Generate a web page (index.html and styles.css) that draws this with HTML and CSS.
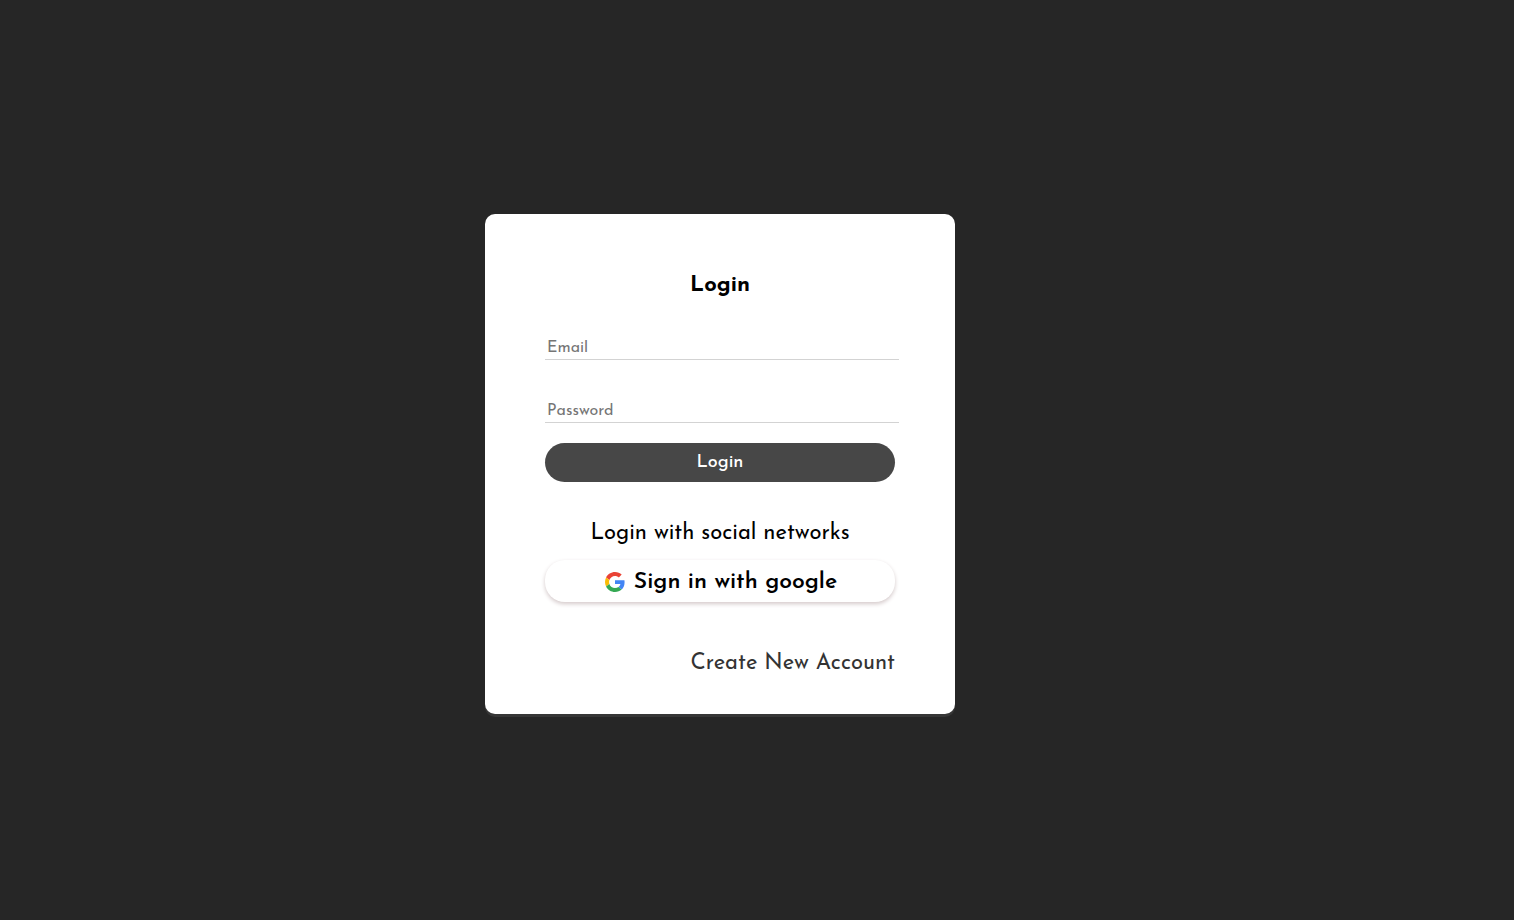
FILE: index.html
```html
<!DOCTYPE html>
<html lang="en">
<head>
<meta charset="utf-8">
<meta name="viewport" content="width=device-width, initial-scale=1">
<title>Login</title>
<link rel="stylesheet" href="styles.css">
</head>
<body>
<main class="page">
  <section class="card">
    <h1 class="title">Login</h1>
    <form class="form">
      <input class="field" type="email" placeholder="Email" aria-label="Email">
      <input class="field" type="password" placeholder="Password" aria-label="Password">
      <button class="submit" type="submit">Login</button>
    </form>
    <p class="social">Login with social networks</p>
    <button class="google" type="button">
      <svg class="logo" viewBox="0 0 48 48" aria-hidden="true">
        <path fill="#EA4335" d="M24 9.5c3.54 0 6.71 1.22 9.21 3.6l6.85-6.85C35.9 2.38 30.47 0 24 0 14.62 0 6.51 5.38 2.56 13.22l7.98 6.19C12.43 13.72 17.74 9.5 24 9.5z"/>
        <path fill="#4285F4" d="M46.98 24.55c0-1.57-.15-3.09-.38-4.55H24v9.02h12.94c-.58 2.96-2.26 5.48-4.78 7.18l7.73 6c4.51-4.18 7.09-10.36 7.09-17.65z"/>
        <path fill="#FBBC05" d="M10.53 28.59c-.48-1.45-.76-2.99-.76-4.59s.27-3.14.76-4.59l-7.98-6.19C.92 16.46 0 20.12 0 24c0 3.88.92 7.54 2.56 10.78l7.97-6.19z"/>
        <path fill="#34A853" d="M24 48c6.48 0 11.93-2.13 15.89-5.81l-7.73-6c-2.15 1.45-4.92 2.3-8.16 2.3-6.26 0-11.57-4.22-13.47-9.91l-7.98 6.19C6.51 42.62 14.62 48 24 48z"/>
      </svg>
      <span>Sign in with google</span>
    </button>
    <a class="create" href="#">Create New Account</a>
  </section>
</main>
</body>
</html>
```
FILE: styles.css
```css
* {
  box-sizing: border-box;
}

body {
  margin: 0;
  background: #262626;
  font-family: "Josefin Sans", Lato, sans-serif;
}

.page {
  display: flex;
  align-items: center;
  justify-content: center;
  min-height: 100vh;
  padding: 8px 74px 0 0;
}

.card {
  display: flex;
  flex-direction: column;
  width: 100%;
  max-width: 470px;
  padding: 58px 60px 36px;
  border-radius: 10px;
  background: #fff;
  box-shadow: 0 3px 0 #363636;
}

.title {
  margin: 0 0 34px;
  font-size: 22px;
  font-weight: 700;
  line-height: 28px;
  text-align: center;
}

.form {
  display: flex;
  flex-direction: column;
  gap: 20px;
}

.field {
  width: calc(100% + 4px);
  height: 26px;
  padding: 2px 2px 0;
  border: 0;
  border-bottom: 1px solid #d3d3d3;
  background: none;
  font: 16px "Josefin Sans", Lato, sans-serif;
  outline: none;
}

.field + .field {
  margin-top: 17px;
}

.field::placeholder {
  color: #757575;
}

.submit {
  height: 39px;
  border: 0;
  border-radius: 20px;
  background: #474747;
  color: #fff;
  font: 500 18px "Josefin Sans", Lato, sans-serif;
}

.social {
  margin: 38px 0 12px;
  font-size: 22px;
  line-height: 28px;
  text-align: center;
}

.google {
  display: flex;
  align-items: center;
  justify-content: center;
  gap: 9px;
  height: 42px;
  padding: 2px 0 0 2px;
  border: 0;
  border-radius: 20px;
  background: #fff;
  box-shadow: 0 2px 4px #d4c9ca;
  color: #000;
  font: 600 23px "Josefin Sans", Lato, sans-serif;
}

.logo {
  width: 20px;
  height: 20px;
}

.create {
  align-self: flex-end;
  margin-top: 48px;
  color: #333;
  font-size: 22px;
  line-height: 28px;
  text-decoration: none;
}
```
